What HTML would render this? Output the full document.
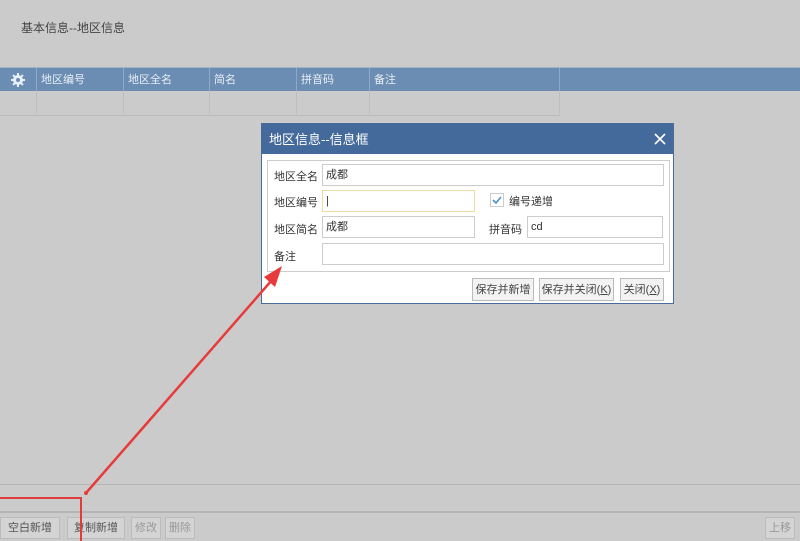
<!DOCTYPE html>
<html><head><meta charset="utf-8"><style>
*{box-sizing:border-box;margin:0;padding:0}
html,body{width:800px;height:541px;overflow:hidden}
body{background:#cbcbcb;position:relative;font-family:"Liberation Sans","Noto Sans CJK SC",sans-serif;font-size:12px;color:#333;line-height:14px}
.abs{position:absolute}
.hdr{top:67px;left:0;width:800px;height:24px;background:#6b8db3;border-top:1px solid #9fb5cc}
.hdr div{position:absolute;top:0;height:23px;line-height:25px;color:#e8eef5;padding-left:4px;border-left:1px solid #8eaac8;font-size:11px}
.row{top:91px;left:0;width:560px;height:25px;border-bottom:1px solid #bdbdbd}
.row div{position:absolute;top:0;height:25px;border-left:1px solid #c0c0c0}
.dlg{left:261px;top:123px;width:413px;height:181px;background:#fff;border:1px solid #4a6c98}
.tt{left:0;top:0;width:411px;height:30px;background:#446a9b;color:#fff;font-size:13px;line-height:32px;padding-left:7px}
.lbl{position:absolute;font-size:11px;color:#333;line-height:14px}
.inp{position:absolute;height:22px;border:1px solid #ccc;background:#fff;padding-left:3px;line-height:20px;font-size:11px}
.btn{position:absolute;height:23px;border:1px solid #bbb;background:#f3f3f3;line-height:22px;text-align:center;font-size:11px;color:#444}
.bb{position:absolute;top:517px;height:22px;border:1px solid #bbb;background:#d4d4d4;line-height:21px;text-align:center;font-size:11px;color:#555}
</style></head><body>
<div class="abs" style="left:21px;top:21px;font-size:12px;color:#444">基本信息--地区信息</div>
<div class="abs hdr">
<div style="left:0;width:36px;border-left:none;text-align:center;padding:0;line-height:normal">
<svg width="16" height="16" viewBox="0 0 16 16" style="margin-top:4px"><g fill="#e8eef5"><circle cx="8" cy="8" r="5"/><rect x="7" y="1" width="2" height="14"/><rect x="1" y="7" width="14" height="2"/><rect x="7" y="1" width="2" height="14" transform="rotate(45 8 8)"/><rect x="7" y="1" width="2" height="14" transform="rotate(-45 8 8)"/></g><circle cx="8" cy="8" r="2" fill="#6b8db3"/></svg></div>
<div style="left:36px;width:87px">地区编号</div>
<div style="left:123px;width:86px">地区全名</div>
<div style="left:209px;width:87px">简名</div>
<div style="left:296px;width:73px">拼音码</div>
<div style="left:369px;width:190px">备注</div>
<div style="left:559px;width:241px"></div>
</div>
<div class="abs row"><div style="left:36px"></div><div style="left:123px"></div><div style="left:209px"></div><div style="left:296px"></div><div style="left:369px"></div><div style="left:559px"></div></div>
<div class="abs" style="left:0;top:484px;width:800px;height:1px;background:#b5b5b5"></div>
<div class="abs" style="left:0;top:511px;width:800px;height:2px;background:#b5b5b5"></div>
<div class="bb" style="left:0;width:60px">空白新增</div>
<div class="bb" style="left:67px;width:58px">复制新增</div>
<div class="bb" style="left:131px;width:30px;color:#999">修改</div>
<div class="bb" style="left:165px;width:30px;color:#999">删除</div>
<div class="bb" style="left:765px;width:30px;color:#999">上移</div>
<div class="abs" style="left:0;top:497px;width:82px;height:50px;border:2px solid #e03c3c;border-left:none"></div>
<div class="abs dlg">
<div class="abs tt">地区信息--信息框</div>
<svg class="abs" style="left:392px;top:9px" width="12" height="12"><path d="M1 1L11 11M11 1L1 11" stroke="#fff" stroke-width="1.6"/></svg>
<div class="abs" style="left:5px;top:36px;width:403px;height:112px;border:1px solid #ccc"></div>
<div class="lbl" style="left:12px;top:46px">地区全名</div>
<div class="inp" style="left:60px;top:40px;width:342px">成都</div>
<div class="lbl" style="left:12px;top:72px">地区编号</div>
<div class="inp" style="left:60px;top:66px;width:153px;border-color:#f0dca0">|</div>
<div class="abs" style="left:228px;top:69px;width:14px;height:14px;border:1px solid #ccc;background:#fff"><svg width="12" height="12"><path d="M2 6L5 9L10 3" stroke="#4a90c8" stroke-width="1.6" fill="none"/></svg></div>
<div class="lbl" style="left:247px;top:71px">编号递增</div>
<div class="lbl" style="left:12px;top:99px">地区简名</div>
<div class="inp" style="left:60px;top:92px;width:153px">成都</div>
<div class="lbl" style="left:227px;top:99px">拼音码</div>
<div class="inp" style="left:265px;top:92px;width:136px">cd</div>
<div class="lbl" style="left:12px;top:126px">备注</div>
<div class="inp" style="left:60px;top:119px;width:342px"></div>
<div class="btn" style="left:210px;top:154px;width:62px">保存并新增</div>
<div class="btn" style="left:277px;top:154px;width:75px">保存并关闭(<u>K</u>)</div>
<div class="btn" style="left:358px;top:154px;width:44px">关闭(<u>X</u>)</div>
</div>
<svg class="abs" style="left:0;top:0;z-index:5" width="800" height="541"><line x1="86" y1="493" x2="272" y2="280" stroke="#e83a3a" stroke-width="2.5"/><polygon points="282,266 264,277 275,287" fill="#e83a3a"/><circle cx="86" cy="493" r="2" fill="#e83a3a"/></svg>
</body></html>
